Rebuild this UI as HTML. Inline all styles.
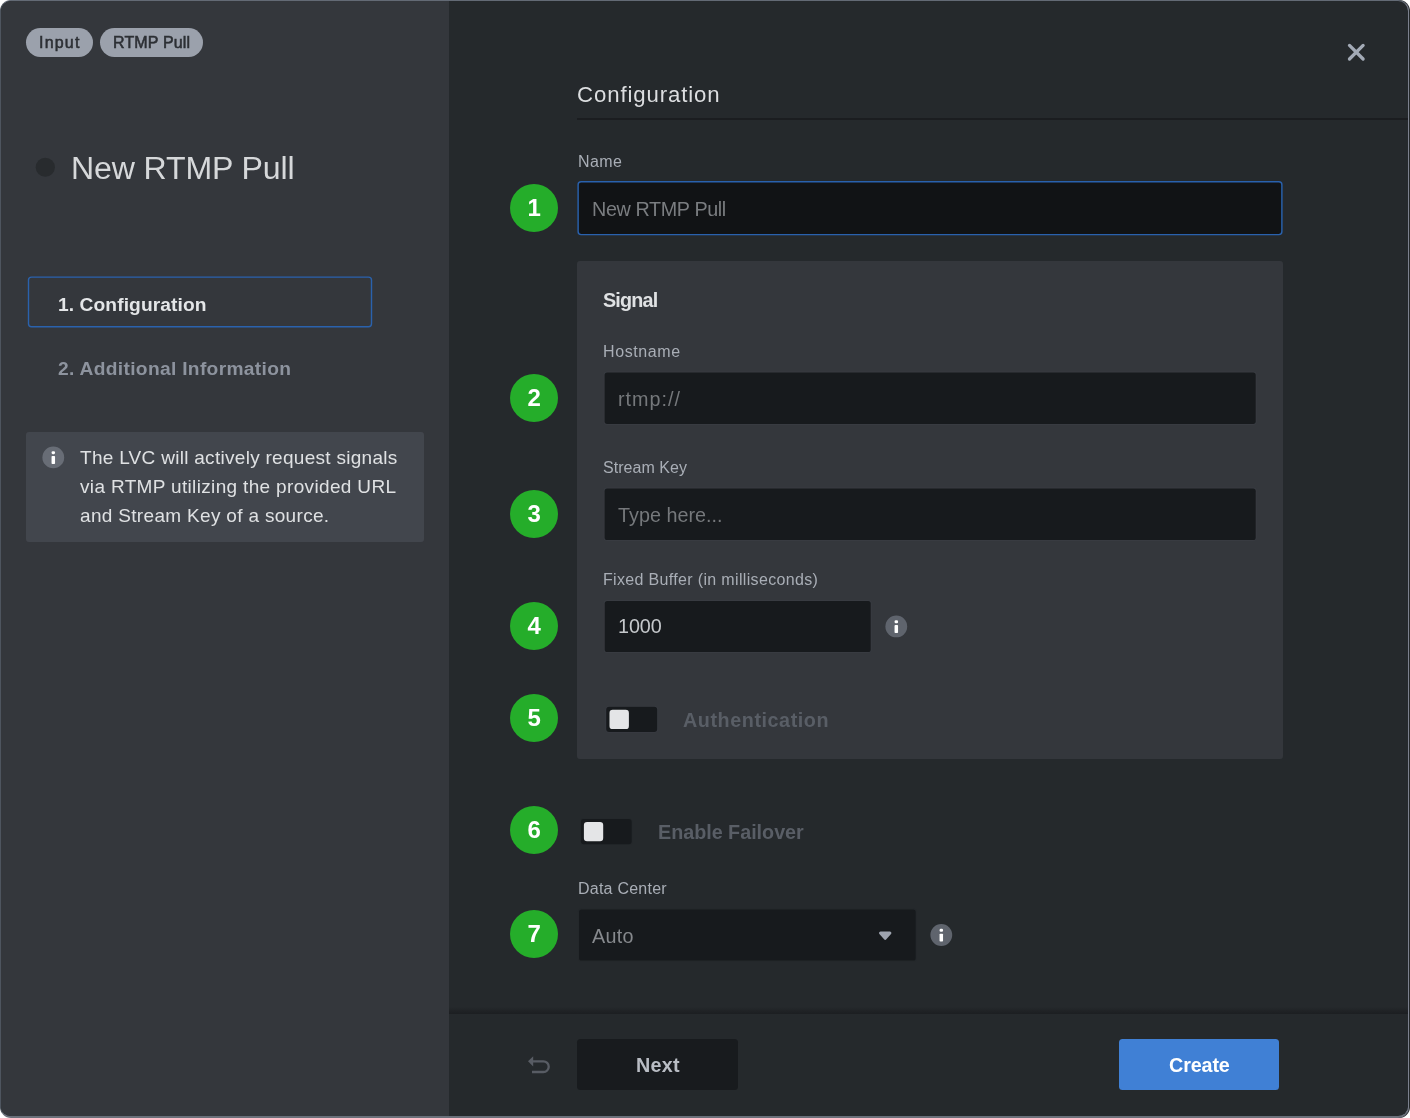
<!DOCTYPE html>
<html lang="en">
<head>
<meta charset="utf-8">
<title>New RTMP Pull</title>
<style>
*{box-sizing:border-box;margin:0;padding:0}
html,body{width:1410px;height:1118px;background:#fff;overflow:hidden}
body{font-family:"Liberation Sans",sans-serif;position:relative}
.edge{position:absolute;left:700px;top:0;width:710px;height:1118px;border-radius:11px;background:#25292c}
.win{position:absolute;left:0;top:0;width:1409px;height:1118px;border-style:solid;border-width:1px 1px 2px 1px;border-color:#636a75 #7b808d #6a707a #4e555f;border-radius:11px;overflow:hidden;background:#25292c}
.o{position:absolute;left:-1px;top:-1px;width:1410px;height:1118px}
.a,.t{position:absolute;white-space:nowrap}
.t{will-change:transform}
.left{position:absolute;left:0;top:0;width:449.2px;height:1118px;background:#34373c}
.pill{position:absolute;top:27.9px;height:28.8px;border-radius:14.4px;background:#9ba1ac}
.badge{position:absolute;left:509.9px;width:48.2px;height:48.2px;border-radius:50%;background:#25ad2a;color:#fff;font-weight:bold;font-size:24px;line-height:48.2px;text-align:center;padding-top:0.4px;will-change:transform}
</style>
</head>
<body>
<div class="edge"></div>
<div class="win"><div class="o">
<div class="left"></div>
<div class="pill" style="left:25.9px;width:67.4px"></div>
<div class="pill" style="left:99.7px;width:103px"></div>
<svg class="a" style="left:30px;top:152px" width="30" height="30" viewBox="0 0 30 30"><circle cx="15.3" cy="15.25" r="9.6" fill="#282b2e"/></svg>
<svg class="a" style="left:20px;top:270px" width="360" height="64" viewBox="0 0 360 64"><rect x="8.5" y="7.1" width="343" height="49.6" rx="3" fill="none" stroke="#2a62ad" stroke-width="1.4"/></svg>
<div class="a" style="left:26px;top:431.7px;width:397.5px;height:110.4px;border-radius:3px;background:#42464d"></div>
<svg class="a" style="left:40px;top:444px" width="28" height="28" viewBox="0 0 28 28"><circle cx="13.30" cy="13.40" r="10.9" fill="#686d76"/><rect x="11.55" y="7.25" width="3.5" height="2.9" rx="1.3" fill="#fff"/><rect x="11.55" y="12.05" width="3.5" height="7.9" rx="0.8" fill="#fff"/></svg>
<svg class="a" style="left:1344px;top:40px" width="24" height="24" viewBox="0 0 24 24"><path d="M5.5 5.4 L19.1 19 M19.1 5.4 L5.5 19" stroke="#a3aab6" stroke-width="3.3" stroke-linecap="round" fill="none"/></svg>
<div class="a" style="left:577.3px;top:118px;width:833px;height:1.6px;background:#1b1d20"></div>
<svg class="a" style="left:570px;top:174px" width="720" height="68" viewBox="0 0 720 68"><rect x="8.12" y="7.72" width="703.76" height="52.9" rx="3" fill="#111315" stroke="#2961ad" stroke-width="1.45"/></svg>
<div class="a" style="left:577.3px;top:261.3px;width:705.7px;height:498px;border-radius:3px;background:#34373c"></div>
<svg class="a" style="left:600px;top:368px" width="663" height="63" viewBox="0 0 663 63"><rect x="3.60" y="3.40" width="653.10" height="53.50" rx="3.4" fill="#383b41"/><rect x="4.60" y="4.40" width="651.10" height="51.50" rx="2.6" fill="#171a1d"/></svg><svg class="a" style="left:600px;top:484px" width="663" height="63" viewBox="0 0 663 63"><rect x="3.60" y="3.60" width="653.10" height="53.40" rx="3.4" fill="#383b41"/><rect x="4.60" y="4.60" width="651.10" height="51.40" rx="2.6" fill="#171a1d"/></svg><svg class="a" style="left:600px;top:596px" width="278" height="63" viewBox="0 0 278 63"><rect x="3.70" y="3.90" width="268.00" height="53.10" rx="3.4" fill="#383b41"/><rect x="4.70" y="4.90" width="266.00" height="51.10" rx="2.6" fill="#171a1d"/></svg>
<svg class="a" style="left:883px;top:613px" width="28" height="28" viewBox="0 0 28 28"><circle cx="13.30" cy="13.45" r="10.9" fill="#5f646d"/><rect x="11.55" y="7.30" width="3.5" height="2.9" rx="1.3" fill="#fff"/><rect x="11.55" y="12.10" width="3.5" height="7.9" rx="0.8" fill="#fff"/></svg>
<svg class="a" style="left:602px;top:702px" width="63" height="37" viewBox="0 0 63 37"><rect x="3.40" y="3.90" width="52.60" height="26.80" rx="3.8" fill="#383b41"/><rect x="4.20" y="4.70" width="51.00" height="25.20" rx="3" fill="#171a1d"/><rect x="7.50" y="7.80" width="19.40" height="19.30" rx="3.2" fill="#e4e5e7"/></svg><svg class="a" style="left:576px;top:815px" width="62" height="37" viewBox="0 0 62 37"><rect x="4.10" y="3.30" width="52.40" height="26.80" rx="3.8" fill="#24282b"/><rect x="4.90" y="4.10" width="50.80" height="25.20" rx="3" fill="#171a1d"/><rect x="7.90" y="6.90" width="19.30" height="19.30" rx="3.2" fill="#e4e5e7"/></svg>
<svg class="a" style="left:575px;top:905px" width="348" height="63" viewBox="0 0 348 63"><rect x="3.00" y="3.40" width="338.70" height="53.20" rx="3.4" fill="#24282b"/><rect x="4.00" y="4.40" width="336.70" height="51.20" rx="2.6" fill="#171a1d"/></svg>
<svg class="a" style="left:876px;top:928px" width="18" height="14" viewBox="0 0 18 14"><path d="M4.5 5.0 H13.9 L9.2 10.3 Z" fill="#9ea4af" stroke="#9ea4af" stroke-width="3" stroke-linejoin="round"/></svg>
<svg class="a" style="left:928px;top:922px" width="28" height="28" viewBox="0 0 28 28"><circle cx="13.30" cy="13.00" r="10.9" fill="#5f646d"/><rect x="11.55" y="6.85" width="3.5" height="2.9" rx="1.3" fill="#fff"/><rect x="11.55" y="11.65" width="3.5" height="7.9" rx="0.8" fill="#fff"/></svg>
<div class="badge" style="top:183.9px">1</div>
<div class="badge" style="top:373.9px">2</div>
<div class="badge" style="top:489.9px">3</div>
<div class="badge" style="top:601.9px">4</div>
<div class="badge" style="top:693.9px">5</div>
<div class="badge" style="top:805.9px">6</div>
<div class="badge" style="top:909.9px">7</div>
<div class="a" style="left:449.2px;top:1006.5px;width:961px;height:7.3px;background:linear-gradient(to bottom,rgba(28,30,33,0),rgba(28,30,33,.55) 50%,rgba(28,30,33,1))"></div>
<svg class="a" style="left:520px;top:1045px" width="40" height="40" viewBox="0 0 40 40"><path d="M12.6 16.35 H23.4 a5.33 5.33 0 0 1 0 10.66 H12" stroke="#585c64" stroke-width="2.3" fill="none"/><path d="M8 16.35 L13.2 11.2 V21.4 Z" fill="#585c64"/></svg>
<div class="a" style="left:577.3px;top:1039px;width:160.4px;height:51.3px;border-radius:3.5px;background:#181b1e"></div>
<div class="a" style="left:1119px;top:1039px;width:160.2px;height:51.4px;border-radius:3.5px;background:#4080d5"></div>
<div class="t" id="p1" style="left:39.00px;top:32.00px;font-size:16px;line-height:22px;-webkit-text-stroke:0.55px #2c2f34;color:#2c2f34;letter-spacing:1.188px">Input</div>
<div class="t" id="p2" style="left:113.00px;top:32.00px;font-size:16px;line-height:22px;-webkit-text-stroke:0.55px #2c2f34;color:#2c2f34;letter-spacing:0.140px">RTMP Pull</div>
<div class="t" id="title" style="left:71.00px;top:146.00px;font-size:32.1px;line-height:45px;color:#d6d8da;letter-spacing:-0.126px">New RTMP Pull</div>
<div class="t" id="nav1" style="left:58.00px;top:291.00px;font-size:19.2px;line-height:27px;font-weight:bold;color:#e4e6e8;letter-spacing:0.090px">1. Configuration</div>
<div class="t" id="nav2" style="left:58.00px;top:355.00px;font-size:19.2px;line-height:27px;font-weight:bold;color:#8d939e;letter-spacing:0.320px">2. Additional Information</div>
<div class="t" id="info1" style="left:80.00px;top:444.00px;font-size:19px;line-height:27px;color:#dfe1e3;letter-spacing:0.289px">The LVC will actively request signals</div>
<div class="t" id="info2" style="left:80.00px;top:473.00px;font-size:19px;line-height:27px;color:#dfe1e3;letter-spacing:0.339px">via RTMP utilizing the provided URL</div>
<div class="t" id="info3" style="left:80.00px;top:502.00px;font-size:19px;line-height:27px;color:#dfe1e3;letter-spacing:0.320px">and Stream Key of a source.</div>
<div class="t" id="h1" style="left:577.00px;top:79.00px;font-size:22.2px;line-height:31px;color:#dcdee0;letter-spacing:0.892px">Configuration</div>
<div class="t" id="lname" style="left:578.00px;top:151.00px;font-size:16px;line-height:22px;color:#a9aeb6;letter-spacing:0.447px">Name</div>
<div class="t" id="iname" style="left:592.00px;top:195.00px;font-size:19.75px;line-height:28px;color:#7a7d80;letter-spacing:-0.370px">New RTMP Pull</div>
<div class="t" id="signal" style="left:603.00px;top:286.00px;font-size:19.75px;line-height:28px;font-weight:bold;color:#dfe1e3;letter-spacing:-0.806px">Signal</div>
<div class="t" id="lhost" style="left:603.00px;top:341.00px;font-size:16px;line-height:22px;color:#a9aeb6;letter-spacing:0.596px">Hostname</div>
<div class="t" id="ihost" style="left:618.00px;top:385.00px;font-size:19.75px;line-height:28px;color:#75787b;letter-spacing:1.013px">rtmp://</div>
<div class="t" id="lkey" style="left:603.00px;top:457.00px;font-size:16px;line-height:22px;color:#a9aeb6;letter-spacing:0.040px">Stream Key</div>
<div class="t" id="ikey" style="left:618.00px;top:501.00px;font-size:19.75px;line-height:28px;color:#75787b;letter-spacing:0.023px">Type here...</div>
<div class="t" id="lbuf" style="left:603.00px;top:569.00px;font-size:16px;line-height:22px;color:#a9aeb6;letter-spacing:0.337px">Fixed Buffer (in milliseconds)</div>
<div class="t" id="ibuf" style="left:618.00px;top:612.00px;font-size:19.75px;line-height:28px;color:#c5c8cb;letter-spacing:-0.083px">1000</div>
<div class="t" id="auth" style="left:683.00px;top:706.00px;font-size:19.75px;line-height:28px;font-weight:bold;color:#595e66;letter-spacing:0.561px">Authentication</div>
<div class="t" id="fail" style="left:658.00px;top:818.00px;font-size:19.75px;line-height:28px;font-weight:bold;color:#595e66;letter-spacing:-0.017px">Enable Failover</div>
<div class="t" id="ldc" style="left:578.00px;top:878.00px;font-size:16px;line-height:22px;color:#a9aeb6;letter-spacing:0.236px">Data Center</div>
<div class="t" id="auto" style="left:592.00px;top:922.00px;font-size:19.75px;line-height:28px;color:#86898d;letter-spacing:0.304px">Auto</div>
<div class="t" id="next" style="left:636.00px;top:1051.00px;font-size:19.75px;line-height:28px;font-weight:bold;color:#b9bdc4;letter-spacing:0.278px">Next</div>
<div class="t" id="create" style="left:1169.00px;top:1051.00px;font-size:19.75px;line-height:28px;font-weight:bold;color:#ffffff;letter-spacing:-0.134px">Create</div>
</div></div>
</body>
</html>
